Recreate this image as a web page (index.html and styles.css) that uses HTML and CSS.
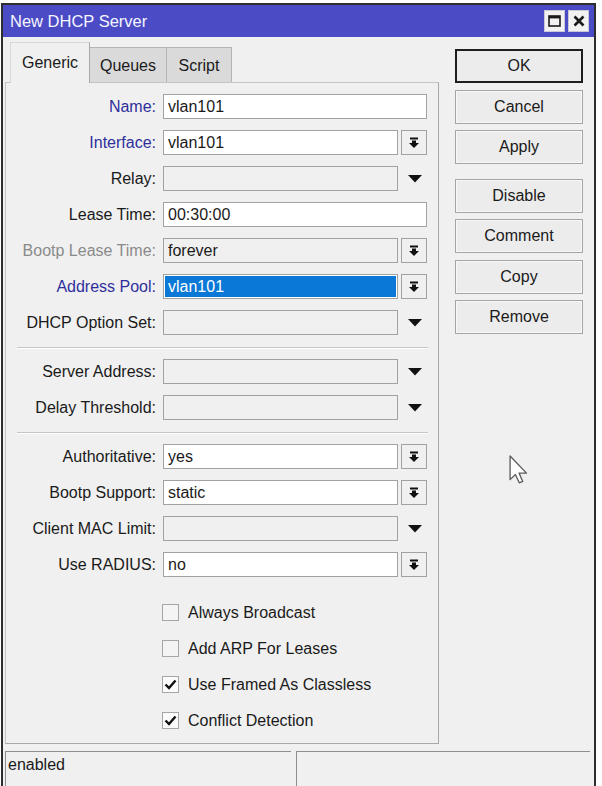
FILE: index.html
```html
<!DOCTYPE html>
<html lang="en">
<head>
  <meta charset="UTF-8">
  <title>New DHCP Server</title>
  <meta name="viewport" content="width=device-width, initial-scale=1.0">
  <link rel="stylesheet" href="styles.css">
</head>
<body>

  <div class="window">
    <div class="titlebar">
      <span class="title">New DHCP Server</span>
      <div class="win-btns">
        <span class="win-btn">
          <svg width="13" height="12" viewBox="0 0 13 12"><rect x="1" y="1" width="11" height="10" fill="none" stroke="#1a1a1a" stroke-width="1.6"/><rect x="1" y="1" width="11" height="2.4" fill="#1a1a1a"/></svg>
        </span>
        <span class="win-btn">
          <svg width="12" height="12" viewBox="0 0 12 12"><path d="M1.5 1.5 L10.5 10.5 M10.5 1.5 L1.5 10.5" stroke="#1a1a1a" stroke-width="2.6"/></svg>
        </span>
      </div>
    </div>

    <div class="main">
      <div class="tab-area">
        <div class="tabs">
          <div class="tab active">Generic</div>
          <div class="tab">Queues</div>
          <div class="tab tab-script">Script</div>
        </div>

        <div class="panel">
          <div class="row">
            <label class="blue">Name:</label>
            <div class="field">vlan101</div>
          </div>
          <div class="row">
            <label class="blue">Interface:</label>
            <div class="combo">
              <div class="field">vlan101</div>
              <div class="combo-btn"><svg width="12" height="12" viewBox="0 0 12 12"><rect x="2" y="0.5" width="8" height="2"/><rect x="4" y="3.5" width="4" height="2.5"/><polygon points="1,6 11,6 6,11"/></svg></div>
            </div>
          </div>
          <div class="row">
            <label>Relay:</label>
            <div class="combo">
              <div class="field empty"></div>
              <div class="drop"><svg width="14" height="8" viewBox="0 0 14 8"><polygon points="0,0 14,0 7,7.5"/></svg></div>
            </div>
          </div>
          <div class="row">
            <label>Lease Time:</label>
            <div class="field">00:30:00</div>
          </div>
          <div class="row">
            <label class="muted">Bootp Lease Time:</label>
            <div class="combo">
              <div class="field empty">forever</div>
              <div class="combo-btn"><svg width="12" height="12" viewBox="0 0 12 12"><rect x="2" y="0.5" width="8" height="2"/><rect x="4" y="3.5" width="4" height="2.5"/><polygon points="1,6 11,6 6,11"/></svg></div>
            </div>
          </div>
          <div class="row">
            <label class="blue">Address Pool:</label>
            <div class="combo">
              <div class="field selected">vlan101</div>
              <div class="combo-btn"><svg width="12" height="12" viewBox="0 0 12 12"><rect x="2" y="0.5" width="8" height="2"/><rect x="4" y="3.5" width="4" height="2.5"/><polygon points="1,6 11,6 6,11"/></svg></div>
            </div>
          </div>
          <div class="row">
            <label>DHCP Option Set:</label>
            <div class="combo">
              <div class="field empty"></div>
              <div class="drop"><svg width="14" height="8" viewBox="0 0 14 8"><polygon points="0,0 14,0 7,7.5"/></svg></div>
            </div>
          </div>

          <div class="sep"></div>

          <div class="row">
            <label>Server Address:</label>
            <div class="combo">
              <div class="field empty"></div>
              <div class="drop"><svg width="14" height="8" viewBox="0 0 14 8"><polygon points="0,0 14,0 7,7.5"/></svg></div>
            </div>
          </div>
          <div class="row">
            <label>Delay Threshold:</label>
            <div class="combo">
              <div class="field empty"></div>
              <div class="drop"><svg width="14" height="8" viewBox="0 0 14 8"><polygon points="0,0 14,0 7,7.5"/></svg></div>
            </div>
          </div>

          <div class="sep"></div>

          <div class="row">
            <label>Authoritative:</label>
            <div class="combo">
              <div class="field">yes</div>
              <div class="combo-btn"><svg width="12" height="12" viewBox="0 0 12 12"><rect x="2" y="0.5" width="8" height="2"/><rect x="4" y="3.5" width="4" height="2.5"/><polygon points="1,6 11,6 6,11"/></svg></div>
            </div>
          </div>
          <div class="row">
            <label>Bootp Support:</label>
            <div class="combo">
              <div class="field">static</div>
              <div class="combo-btn"><svg width="12" height="12" viewBox="0 0 12 12"><rect x="2" y="0.5" width="8" height="2"/><rect x="4" y="3.5" width="4" height="2.5"/><polygon points="1,6 11,6 6,11"/></svg></div>
            </div>
          </div>
          <div class="row">
            <label>Client MAC Limit:</label>
            <div class="combo">
              <div class="field empty"></div>
              <div class="drop"><svg width="14" height="8" viewBox="0 0 14 8"><polygon points="0,0 14,0 7,7.5"/></svg></div>
            </div>
          </div>
          <div class="row">
            <label>Use RADIUS:</label>
            <div class="combo">
              <div class="field">no</div>
              <div class="combo-btn"><svg width="12" height="12" viewBox="0 0 12 12"><rect x="2" y="0.5" width="8" height="2"/><rect x="4" y="3.5" width="4" height="2.5"/><polygon points="1,6 11,6 6,11"/></svg></div>
            </div>
          </div>

          <div class="checks">
            <div class="check"><span class="box"></span>Always Broadcast</div>
            <div class="check"><span class="box"></span>Add ARP For Leases</div>
            <div class="check"><span class="box on"><svg width="13" height="11" viewBox="0 0 13 11"><path d="M1.5 5.5 L5 9 L11.5 1.5" fill="none" stroke="#111" stroke-width="2.4"/></svg></span>Use Framed As Classless</div>
            <div class="check"><span class="box on"><svg width="13" height="11" viewBox="0 0 13 11"><path d="M1.5 5.5 L5 9 L11.5 1.5" fill="none" stroke="#111" stroke-width="2.4"/></svg></span>Conflict Detection</div>
          </div>
        </div>
      </div>

      <div class="actions">
        <button class="default">OK</button>
        <button>Cancel</button>
        <button>Apply</button>
        <button class="group">Disable</button>
        <button>Comment</button>
        <button>Copy</button>
        <button>Remove</button>
      </div>
    </div>

    <div class="statusbar">
      <div class="status status-left">enabled</div>
      <div class="status status-right"></div>
    </div>

    <svg class="cursor" width="19" height="29" viewBox="0 0 13 20"><path d="M0.7 0.7 L0.7 17 L4.4 13.4 L7 19.2 L9.4 18.2 L6.9 12.5 L12 12.5 Z" fill="#fff" stroke="#5a5a5a" stroke-width="0.9" stroke-linejoin="round"/></svg>
  </div>

</body>
</html>
```

FILE: styles.css
```css
html, body {
  overflow: hidden;
}

body {
  margin: 0;
  background: #ffffff;
  font-family: 'Liberation Sans', Arial, sans-serif;
  font-size: 16px;
  color: #1a1a1a;
}

.window {
  position: relative;
  margin: 3px 0 0 1px;
  width: 595px;
  height: 783px;
  box-sizing: border-box;
  border: 2px solid #2e2e2e;
  border-bottom: none;
  background: #f0f0f0;
  display: flex;
  flex-direction: column;
  overflow: hidden;
}

.titlebar {
  height: 32px;
  flex: none;
  background: #4b4bc5;
  display: flex;
  align-items: center;
  justify-content: space-between;
  padding: 0 5px 0 7px;
}

.title {
  color: #f6f6ff;
  font-size: 16.5px;
}

.win-btns {
  display: flex;
  gap: 3px;
}

.win-btn {
  width: 21px;
  height: 22px;
  box-sizing: border-box;
  background: #f2f2f2;
  border: 1px solid #c8c8d8;
  display: flex;
  align-items: center;
  justify-content: center;
}

.main {
  display: flex;
  height: 711px;
  flex: none;
}

.tab-area {
  width: 434px;
  margin-left: 2px;
  display: flex;
  flex-direction: column;
}

.tabs {
  display: flex;
  align-items: flex-end;
  height: 45px;
  padding-left: 5px;
}

.tab {
  height: 35px;
  box-sizing: border-box;
  width: 77px;
  background: #dadada;
  border: 1px solid #b4b4b4;
  border-bottom: none;
  border-left: none;
  display: flex;
  align-items: center;
  justify-content: center;
  padding-top: 1px;
}

.tab.active {
  position: relative;
  height: 41px;
  width: 80px;
  margin-bottom: -1px;
  background: #f0f0f0;
  border-left: 1px solid #d8d8d8;
  border-top: 1px solid #d8d8d8;
  border-right: 1px solid #a8a8a8;
  padding-top: 0;
}

.tab-script {
  width: 65px;
}

.panel {
  flex: 1;
  display: flex;
  flex-direction: column;
  margin-bottom: 4px;
  border: 1px solid #a8a8a8;
  border-left-color: #c4c4c4;
  border-top-color: #c4c4c4;
  padding-top: 11px;
}

.row {
  display: grid;
  grid-template-columns: 150px 264px;
  column-gap: 7px;
  align-items: center;
  height: 25px;
  flex: none;
  margin-bottom: 11px;
}

.row label {
  text-align: right;
  white-space: nowrap;
}

.blue {
  color: #2f2f9c;
}

.muted {
  color: #8a8a8a;
}

.field {
  height: 25px;
  box-sizing: border-box;
  border: 1px solid #a2a2a2;
  background: #ffffff;
  padding: 0 4px;
  line-height: 23px;
  white-space: nowrap;
}

.field.empty {
  background: #f0f0f0;
}

.field.selected {
  background: #0a78d7;
  color: #ffffff;
  box-shadow: inset 0 0 0 1px #ffffff;
}

.combo {
  display: grid;
  grid-template-columns: 235px 26px;
  column-gap: 3px;
  align-items: center;
}

.combo-btn {
  height: 25px;
  box-sizing: border-box;
  border: 1px solid #a2a2a2;
  background: #f0f0f0;
  display: flex;
  align-items: center;
  justify-content: center;
  fill: #111;
}

.drop {
  display: flex;
  align-items: center;
  justify-content: center;
  padding-left: 1px;
  fill: #111;
}

.sep {
  flex: none;
  margin: 1px 10px 10px 11px;
  border-top: 1px solid #c6c6c6;
  border-bottom: 1px solid #ffffff;
}

.checks {
  margin: 16px 0 0 156px;
  display: flex;
  flex-direction: column;
  gap: 19px;
}

.check {
  display: flex;
  align-items: center;
  gap: 9px;
  height: 17px;
}

.box {
  width: 17px;
  height: 17px;
  box-sizing: border-box;
  border: 1px solid #a6a6a6;
  background: #f4f4f4;
  display: flex;
  align-items: center;
  justify-content: center;
}

.box.on {
  background: #fbfbfb;
}

.actions {
  width: 128px;
  margin-left: 16px;
  padding-top: 12px;
  display: flex;
  flex-direction: column;
  gap: 6.5px;
}

button {
  height: 34px;
  font-family: 'Liberation Sans', Arial, sans-serif;
  font-size: 16px;
  color: #1a1a1a;
  background: #ececec;
  border: 1px solid #a4a4a4;
  box-shadow: inset 0 0 0 1px #f8f8f8;
  padding: 0;
}

button.default {
  border: 2px solid #1e1e1e;
  box-shadow: none;
}

button.group {
  margin-top: 8px;
}

.statusbar {
  display: flex;
  gap: 5px;
  margin-top: 3px;
  padding-left: 2px;
  height: 36px;
  flex: none;
}

.status {
  box-sizing: border-box;
  border-top: 1px solid #8e8e8e;
  border-left: 1px solid #8e8e8e;
  padding: 4px 0 0 2px;
  line-height: 18px;
}

.status-left {
  width: 286px;
}

.status-right {
  width: 294px;
}

.cursor {
  position: absolute;
  left: 506px;
  top: 450px;
}
```
